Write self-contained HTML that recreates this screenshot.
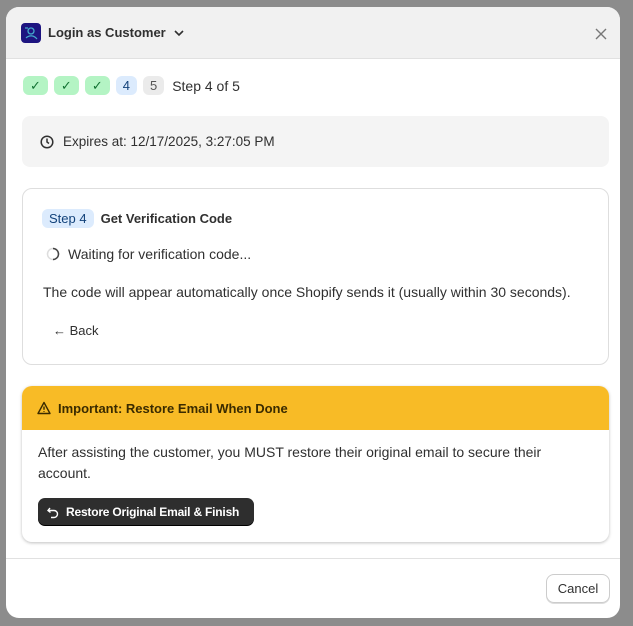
<!DOCTYPE html>
<html><head><style>
*{box-sizing:border-box;margin:0;padding:0}
body{width:633px;height:626px;overflow:hidden;background:#8c8c8c;font-family:"Liberation Sans",sans-serif;font-size:14px;color:#303030;position:relative}
.modal{position:absolute;left:6px;top:7px;width:614px;height:611px;background:#fff;border-radius:13px;overflow:hidden}
.hdr{height:52px;background:#f1f1f1;border-bottom:1px solid #e1e1e1;display:flex;align-items:center;padding-left:15px}
.logo{width:20px;height:20px;border-radius:4px;background:#1d1480;margin-right:7px}
.title{font-size:13px;font-weight:bold;color:#303030}
.x{position:absolute;right:13px;top:20px}
.steps{position:absolute;left:17px;top:69px;display:flex;align-items:center;gap:6px}
.p{height:19px;border-radius:6px;padding:0 7px;font-size:13px;line-height:19px}
.g{background:#b4f4c4;color:#137333}
.b{background:#dcebfd;color:#12427a}
.n{background:#ebebeb;color:#555}
.exp{position:absolute;left:16px;top:109px;width:587px;height:51px;background:#f4f4f4;border-radius:8px;display:flex;align-items:center;padding-left:18px;font-size:13.5px}
.card{position:absolute;left:16px;top:181px;width:587px;height:177px;border:1px solid #dedede;border-radius:10px}
.warn{position:absolute;left:16px;top:379px;width:587px;height:156px;border-radius:10px;overflow:hidden;box-shadow:0 1px 3px rgba(0,0,0,.25);background:#fff}
.wh{height:44px;background:#f8bb26;display:flex;align-items:center;padding-left:15px;font-weight:bold;color:#3a2b00;font-size:13px}
.btn{position:absolute;left:16px;top:112px;width:216px;height:27px;background:#2e2e2e;border-radius:7px;color:#fff;font-weight:bold;display:flex;align-items:center;padding-left:8px;box-shadow:0 1px 0 #000;white-space:nowrap;font-size:12px;letter-spacing:-0.2px}
.ft{position:absolute;left:0;top:551px;width:614px;border-top:1px solid #e1e1e1}
.cancel{position:absolute;left:540px;top:567px;width:64px;height:29px;border:1px solid #ccc;border-radius:8px;display:flex;align-items:center;justify-content:center;box-shadow:0 1px 0 #ddd;font-size:13px}
</style></head><body>
<div class="modal">
<div class="hdr"><div class="logo"><svg width="20" height="20"><circle cx="10" cy="8" r="3" fill="none" stroke="#4ac" stroke-width="1.3"/><path d="M5 15c3-3 8-3 11 1M4 5h3" stroke="#4ac" fill="none" stroke-width="1.2"/></svg></div><span class="title">Login as Customer</span><svg width="14" height="14" style="margin-left:6px"><path d="M3 5l4 4 4-4" stroke="#303030" stroke-width="1.6" fill="none"/></svg></div>
<div class="x"><svg width="12" height="12"><path d="M1 1l10 10M11 1L1 11" stroke="#777" stroke-width="1.4"/></svg></div>
<div class="steps"><span class="p g">✓</span><span class="p g">✓</span><span class="p g">✓</span><span class="p b">4</span><span class="p n">5</span><span style="font-size:14px;margin-left:2px">Step 4 of 5</span></div>
<div class="exp"><svg width="14" height="14" style="margin-right:9px"><circle cx="7" cy="7" r="5.8" fill="none" stroke="#303030" stroke-width="1.5"/><path d="M7 3.5V7l2 1.5" stroke="#303030" stroke-width="1.5" fill="none"/></svg>Expires at: 12/17/2025, 3:27:05 PM</div>
<div class="card">
<div style="position:absolute;left:19px;top:20px;display:flex;align-items:center"><span class="p b" style="padding:0 7px">Step 4</span><b style="margin-left:7px;font-size:13px">Get Verification Code</b></div>
<div style="position:absolute;left:23px;top:57px;display:flex;align-items:center"><svg width="14" height="14" style="margin-right:8px"><circle cx="7" cy="7" r="5.5" fill="none" stroke="#ddd" stroke-width="1.5"/><path d="M7 1.5A5.5 5.5 0 0 1 7 12.5" stroke="#444" stroke-width="1.5" fill="none"/></svg>Waiting for verification code...</div>
<div style="position:absolute;left:20px;top:95px">The code will appear automatically once Shopify sends it (usually within 30 seconds).</div>
<div style="position:absolute;left:30px;top:134px;font-size:13px">← Back</div>
</div>
<div class="warn">
<div class="wh"><svg width="14" height="14" style="margin-right:7px"><path d="M7 1.5L13 12.5H1z" fill="none" stroke="#3a2b00" stroke-width="1.4" stroke-linejoin="round"/><path d="M7 5.5v3.2M7 10v.8" stroke="#3a2b00" stroke-width="1.4"/></svg>Important: Restore Email When Done</div>
<div style="position:absolute;left:16px;top:56px;line-height:21px;width:520px">After assisting the customer, you MUST restore their original email to secure their account.</div>
<div class="btn"><svg width="14" height="14" style="margin-right:6px"><path d="M4 3L2 5.5 4.5 7.5M2.5 5.5H8a3.5 3.5 0 0 1 0 7H5" stroke="#fff" stroke-width="1.4" fill="none"/></svg>Restore Original Email &amp; Finish</div>
</div>
<div class="ft"></div>
<div class="cancel">Cancel</div>
</div>
</body></html>
